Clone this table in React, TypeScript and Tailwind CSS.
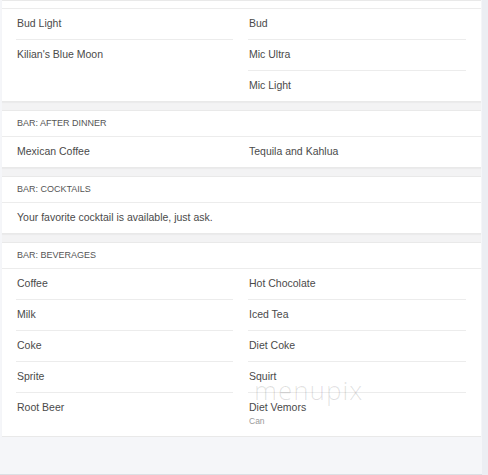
import React from "react";

type Item = { name: string; sub?: string };

function Row({ item, last }: { item: Item; last: boolean }) {
  return (
    <div className={"pl-px pt-[7px] pb-[8px] " + (last ? "" : "border-b border-[#ececec]")}>
      <div className="text-[10.5px] leading-[15px] text-[#4a4a4a]">{item.name}</div>
      {item.sub && <div className="text-[8.5px] leading-[13px] text-[#9a9a9a]">{item.sub}</div>}
    </div>
  );
}

function Col({ items }: { items: Item[] }) {
  return (
    <div className="flex flex-col">
      {items.map((it, i) => (
        <Row key={it.name} item={it} last={i === items.length - 1} />
      ))}
    </div>
  );
}

function TwoCol({ left, right }: { left: Item[]; right: Item[] }) {
  return (
    <div className="grid grid-cols-[217px_218px] gap-x-[15px] px-[14px]">
      <Col items={left} />
      <Col items={right} />
    </div>
  );
}

function Header({ title }: { title: string }) {
  return (
    <div className="h-[26px] flex items-center px-[15px] border-b border-[#ececec] text-[9px] text-[#555]">
      {title}
    </div>
  );
}

function Card({ children }: { children: React.ReactNode }) {
  return <div className="bg-white border-y border-[#e9e9e9] shadow-[0_1px_1px_rgba(0,0,0,0.03)]">{children}</div>;
}

export default function App() {
  return (
    <div
      className="w-[488px] h-[475px] flex bg-[#f5f6f9] overflow-hidden relative"
      style={{ fontFamily: '"Liberation Sans", Arial, sans-serif' }}
    >
      <div className="w-[482px] h-[475px] pl-[2px] pr-[1px] flex flex-col border-b border-[#dcdfe4]">
        <div className="flex flex-col gap-[8px] bg-[#f3f3f4]">
          <Card>
            <div className="h-[8px] border-b border-[#ececec]" />
            <TwoCol
              left={[{ name: "Bud Light" }, { name: "Kilian's Blue Moon" }]}
              right={[{ name: "Bud" }, { name: "Mic Ultra" }, { name: "Mic Light" }]}
            />
          </Card>
          <Card>
            <Header title="BAR: AFTER DINNER" />
            <TwoCol left={[{ name: "Mexican Coffee" }]} right={[{ name: "Tequila and Kahlua" }]} />
          </Card>
          <Card>
            <Header title="BAR: COCKTAILS" />
            <div className="px-[15px] pt-[7px] pb-[8px] text-[10.5px] leading-[15px] text-[#4a4a4a]">
              Your favorite cocktail is available, just ask.
            </div>
          </Card>
          <Card>
            <Header title="BAR: BEVERAGES" />
            <TwoCol
              left={[
                { name: "Coffee" },
                { name: "Milk" },
                { name: "Coke" },
                { name: "Sprite" },
                { name: "Root Beer" },
              ]}
              right={[
                { name: "Hot Chocolate" },
                { name: "Iced Tea" },
                { name: "Diet Coke" },
                { name: "Squirt" },
                { name: "Diet Vemors", sub: "Can" },
              ]}
            />
          </Card>
        </div>
        <div className="flex-1 bg-[#f5f6f9]" />
      </div>
      <div className="w-[6px] h-[475px] bg-[#eceef3]" />
      <div
        className="absolute left-[254px] top-[377px] text-[26px] leading-[26px] font-light text-[rgba(0,0,0,0.12)] tracking-[1px] pointer-events-none"
        style={{ fontFamily: '"Open Sans", "Liberation Sans", sans-serif' }}
      >
        menupix
      </div>
    </div>
  );
}
